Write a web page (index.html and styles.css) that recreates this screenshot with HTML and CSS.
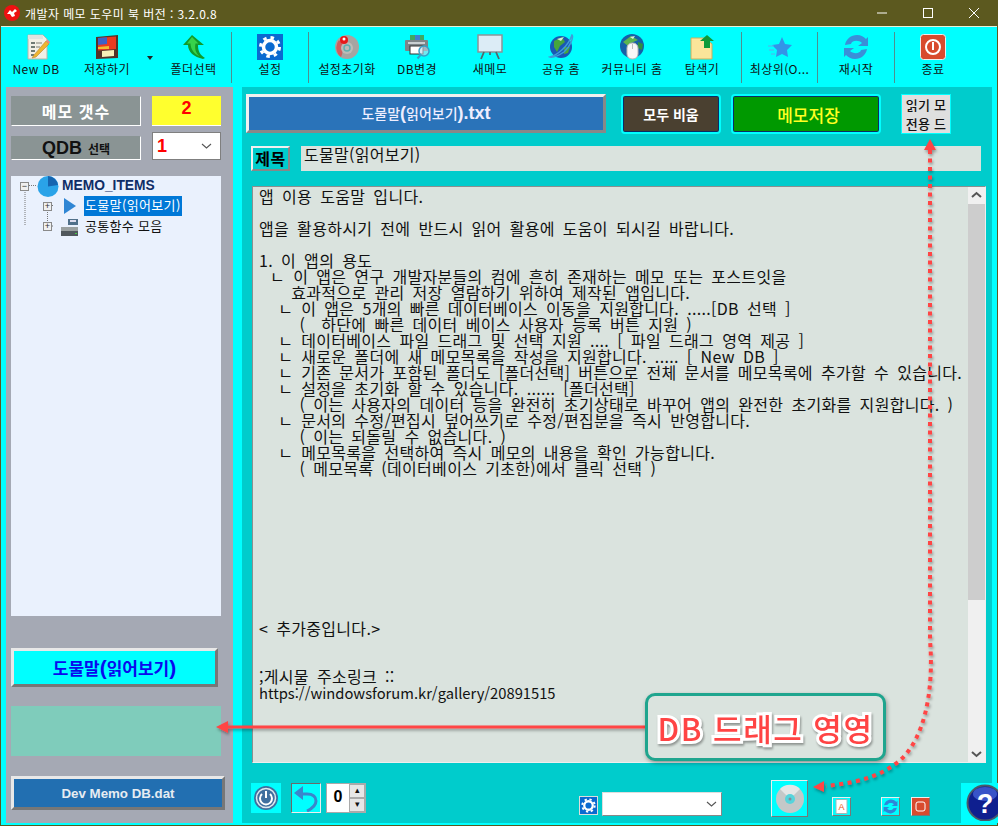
FILE: index.html
```html
<!DOCTYPE html>
<html lang="ko">
<head>
<meta charset="utf-8">
<title>개발자 메모 도우미 북</title>
<link rel="stylesheet" href="styles.css">
</head>
<body>
<div class="window">
  <header class="titlebar">
    <svg class="app-icon" width="16" height="16" viewBox="0 0 16 16"><circle cx="8" cy="8" r="8" fill="#ee1111"/><path d="M3 9l3-4 2 2 3-3 2 2-3 2 1 3-3 1-2-3z" fill="#fff"/></svg>
    <span class="title-text">개발자 메모 도우미 북 버전 : 3.2.0.8</span>
    <div class="win-controls">
      <svg width="46" height="26" viewBox="0 0 46 26"><path d="M18 13h10" stroke="#fff"/></svg>
      <svg width="46" height="26" viewBox="0 0 46 26"><rect x="18.500" y="8.500" width="9" height="9" fill="none" stroke="#fff"/></svg>
      <svg width="46" height="26" viewBox="0 0 46 26"><path d="M18 8l10 10M28 8L18 18" stroke="#fff"/></svg>
    </div>
  </header>

  <nav class="toolbar">
    <div class="tool t-new"><svg class="nudge2" width="26" height="26" viewBox="0 0 26 26"><path d="M3 1h15l4 4v20H3z" fill="#f1efe6" stroke="#b5b5aa"/><path d="M3 1h15v4H3z" fill="#dfe3e0"/><path d="M6 9h4M6 13h4M6 17h4M6 21h3" stroke="#6f7a74" stroke-width="2"/><path d="M11 9h6M11 13h4" stroke="#a5a59c" stroke-width="1.500"/><path d="M9 21L21 7l3 3-13 13-4 1z" fill="#eeb530" stroke="#b9832a" stroke-width=".6"/><path d="M21 7l1.500-1.500 2.500 2.500-1 2z" fill="#e78a80"/></svg><span>New DB</span></div>
    <div class="tool t-save"><svg width="26" height="26" viewBox="0 0 26 26"><path d="M2 3l22-2v23L2 25z" fill="#553328"/><path d="M4 4l18-1.500V15L4 16.500z" fill="#ea3a20"/><path d="M4 4l9-.8V10L4 11z" fill="#3b62c8"/><path d="M8 17l12-1v6L8 23z" fill="#f6eeb8"/><path d="M4 13l11-1v3H4z" fill="#f3bd2d"/></svg><span>저장하기</span></div>
    <div class="tool-caret"></div>
    <div class="tool t-folder"><svg width="26" height="26" viewBox="0 0 26 26"><path d="M11 1L2 11h5c0 7 6 12 15 14l2-1c-5-3-7-7-7-13h6z" fill="#129a2a"/><path d="M11 3L6 9.500h3.500c0 5 3 10 9 13-4-4-5-8-4-13h3z" fill="#37d24a"/></svg><span>폴더선택</span></div>
    <div class="sep sep-first"></div>
    <div class="tool t-76"><svg width="26" height="26" viewBox="0 0 26 26"><rect width="26" height="26" fill="#0a6ad0"/><circle cx="13" cy="13" r="6.500" fill="none" stroke="#fff" stroke-width="3.500"/><circle cx="13" cy="13" r="9.500" fill="none" stroke="#fff" stroke-width="3" stroke-dasharray="3.500 4"/></svg><span>설정</span></div>
    <div class="sep"></div>
    <div class="tool t-76"><svg width="26" height="26" viewBox="0 0 26 26"><circle cx="13" cy="13" r="12" fill="#a5a5a2"/><path d="M5 6a12 12 0 0 0 2 17c2-3 1-7 3-11z" fill="#cf5f5f"/><circle cx="13" cy="14" r="6" fill="#bcbcb8"/><circle cx="13" cy="14" r="3" fill="none" stroke="#5fb0b0" stroke-width="1.500"/><circle cx="10" cy="6" r="4" fill="#e81818"/><circle cx="10" cy="5" r="1.500" fill="#fff"/></svg><span>설정초기화</span></div>
    <div class="tool t-db"><svg width="26" height="26" viewBox="0 0 26 26"><path d="M6 1h14v6H6z" fill="#3fa862"/><path d="M11 1h5v6h-5z" fill="#3f7fd0"/><rect x="1" y="6" width="23" height="11" rx="1" fill="#7d8488"/><rect x="4" y="8" width="17" height="2" fill="#c9cfd2"/><rect x="6" y="12" width="13" height="8" fill="#fff" stroke="#333"/><circle cx="20" cy="17" r="5" fill="#bcd8e8" fill-opacity=".6" stroke="#3a9fc7" stroke-width="1.500"/><path d="M16.500 21l-3 3.500" stroke="#3a9fc7" stroke-width="2"/></svg><span>DB변경</span></div>
    <div class="tool t-memo"><svg width="26" height="26" viewBox="0 0 26 26"><rect x="1" y="1" width="24" height="17" fill="#dcecf6" stroke="#8a9498" stroke-width="1.500"/><path d="M7 18l-3 7M19 18l3 7M13 18v3" stroke="#55666b" stroke-width="1.800"/></svg><span>새메모</span></div>
    <div class="tool t-share"><svg width="26" height="26" viewBox="0 0 26 26"><circle cx="13" cy="13" r="11" fill="#1a58b4"/><path d="M6 7l8-4 3 5-5 4-3 6-3-5z" fill="#46a53c"/><path d="M16 13h6l-2 6-4 1z" fill="#46a53c"/><path d="M9 5l7-2-3 4z" fill="#d8ecd8"/><path d="M2 23C9 21 20 13 24 1c2 2-2 12-8 17-6 4-11 6-14 5z" fill="none" stroke="#3f9cd8" stroke-width="1.500"/></svg><span>공유 홈</span></div>
    <div class="tool t-comm"><svg width="26" height="26" viewBox="0 0 26 26"><circle cx="13" cy="12" r="12" fill="#1660a8"/><path d="M4 8l8-6 7 4-7 3-3 3z" fill="#5bb450"/><path d="M19 8l5 2-1 6-4-2z" fill="#2f8f40"/><path d="M11 3l5-1-2 3z" fill="#dff0df"/><rect x="8" y="9" width="11" height="16" rx="5" fill="#f7f7f7" stroke="#b5b5b5"/><path d="M13.500 10v5" stroke="#bbb"/></svg><span>커뮤니티 홈</span></div>
    <div class="tool t-exp"><svg width="26" height="26" viewBox="0 0 26 26"><path d="M2 4h14l7 6v15H2z" fill="#fbe59a" stroke="#c9b060"/><path d="M18 1l7 6h-4v7h-6V7h-4z" fill="#0d9a3a"/></svg><span>탐색기</span></div>
    <div class="sep sep-exp"></div>
    <div class="tool t-top"><svg width="26" height="26" viewBox="0 0 26 26"><path d="M15 3l3 7 7 1-5 5 1 7-6-3-6 3 1-7-5-5 7-1z" fill="#3394e8"/><path d="M1 12h6M2 16h5M4 20h4" stroke="#55b0ec"/></svg><span>최상위(O...</span></div>
    <div class="sep"></div>
    <div class="tool t-76"><svg width="26" height="26" viewBox="0 0 26 26"><path d="M2 11C3 5 8 1 14 1c4 0 7 2 9 4l2-2v9H15l4-3c-3-3-10-3-11 1z" fill="#3a8fd8"/><path d="M24 15c-1 6-6 10-12 10-4 0-7-2-9-4l-2 2v-9h10l-4 3c3 3 10 3 11-1z" fill="#3a8fd8"/></svg><span>재시작</span></div>
    <div class="sep"></div>
    <div class="tool t-76"><svg width="26" height="26" viewBox="0 0 26 26"><rect x=".5" y=".5" width="25" height="25" rx="3" fill="#d84b2e" stroke="#eee"/><circle cx="13" cy="13" r="7" fill="none" stroke="#fff" stroke-width="2"/><rect x="12" y="8" width="2" height="8" fill="#fff"/></svg><span>종료</span></div>
  </nav>

  <main class="main">
    <aside class="left">
      <div class="count-row">
        <div class="label label-count">메모 갯수</div>
        <div class="count-value">2</div>
      </div>
      <div class="qdb-row">
        <div class="label label-qdb"><b>QDB</b> 선택</div>
        <div class="qdb-select"><span>1</span><svg width="11" height="6" viewBox="0 0 11 6"><path d="M1 1l4.500 4L10 1" fill="none" stroke="#555" stroke-width="1.100"/></svg></div>
      </div>
      <div class="tree">
        <svg class="tree-lines" width="70" height="60" viewBox="0 0 70 60"><path d="M14 14v36M14 9.500h12M36.500 28v22M37 29.500h5M37 50h5" stroke="#777" stroke-dasharray="1 1" fill="none"/></svg>
        <div class="tree-row tree-root">
          <span class="expander">−</span>
          <svg class="pie" width="22" height="21" viewBox="0 0 22 21"><circle cx="11" cy="10.500" r="10.500" fill="#2aa3e8"/><path d="M11 10.500V0a10.500 10.500 0 0 1 10 9z" fill="#1564b0"/></svg>
          <span class="tree-root-label">MEMO_ITEMS</span>
        </div>
        <div class="tree-row tree-child">
          <span class="expander">+</span>
          <svg class="tree-icon" width="14" height="18" viewBox="0 0 14 18"><path d="M1 1l12 8-12 8z" fill="#2f86d4"/></svg>
          <span class="tree-sel">도물말(읽어보기)</span>
        </div>
        <div class="tree-row tree-child">
          <span class="expander">+</span>
          <svg class="tree-icon tree-drive" width="19" height="18" viewBox="0 0 19 18"><path d="M8 1h10v6H8z" fill="#50708a"/><path d="M10 2h6v2h-6z" fill="#dde"/><path d="M1 9h17v9H1z" fill="#9aa0a0"/><path d="M1 13h17v5H1z" fill="#50575c"/><path d="M15 15h2v1h-2z" fill="#4c4"/></svg>
          <span class="tree-label">공통함수 모음</span>
        </div>
      </div>
      <button class="help-btn">도물말<span class="latin">(</span>읽어보기<span class="latin">)</span></button>
      <div class="drag-area"></div>
      <button class="dev-btn">Dev Memo DB.dat</button>
    </aside>

    <section class="right">
      <div class="action-row">
        <button class="file-btn">도물말<span class="latin">(</span>읽어보기<span class="latin">).txt</span></button>
        <button class="round-btn clear-btn">모두 비움</button>
        <button class="round-btn save-btn">메모저장</button>
        <button class="mode-btn"><span>읽기 모</span><span>전용 드</span></button>
      </div>
      <div class="title-row">
        <div class="title-label">제목</div>
        <div class="title-input">도물말(읽어보기)</div>
      </div>
      <div class="editor">
<pre class="editor-text">앱 이용 도움말 입니다.

앱을 활용하시기 전에 반드시 읽어 활용에 도움이 되시길 바랍니다.

1. 이 앱의 용도
 &#8198;ㄴ 이 앱은 연구 개발자분들의 컴에 흔히 존재하는 메모 또는 포스트잇을
    효과적으로 관리 저장 열람하기 위하여 제작된 앱입니다.
  &#8198;ㄴ 이 앱은 5개의 빠른 데이터베이스 이동을 지원합니다. .....[DB 선택 ]
     (  하단에 빠른 데이터 베이스 사용자 등록 버튼 지원 )
  &#8198;ㄴ 데이터베이스 파일 드래그 및 선택 지원 .... [ 파일 드래그 영역 제공 ]
  &#8198;ㄴ 새로운 폴더에 새 메모목록을 작성을 지원합니다. ..... [ New DB ]
  &#8198;ㄴ 기존 문서가 포함된 폴더도 [폴더선택] 버튼으로 전체 문서를 메모목록에 추가할 수 있습니다.
  &#8198;ㄴ 설정을 초기화 할 수 있습니다. ...... [폴더선택]
     ( 이는 사용자의 데이터 등을 완전히 초기상태로 바꾸어 앱의 완전한 초기화를 지원합니다. )
  &#8198;ㄴ 문서의 수정/편집시 덮어쓰기로 수정/편집분을 즉시 반영합니다.
     ( 이는 되돌릴 수 없습니다. )
  &#8198;ㄴ 메모목록을 선택하여 즉시 메모의 내용을 확인 가능합니다.
     ( 메모목록 (데이터베이스 기초한)에서 클릭 선택 )









&lt; 추가중입니다.&gt;


;게시물 주소링크 ::
<span class="url">https://windowsforum.kr/gallery/20891515</span></pre>
        <div class="scrollbar">
          <svg width="17" height="17" viewBox="0 0 17 17"><path d="M4 10l4.500-4 4.500 4" fill="none" stroke="#555" stroke-width="2"/></svg>
          <div class="scroll-track"><div class="scroll-thumb"></div></div>
          <svg width="17" height="17" viewBox="0 0 17 17"><path d="M4 7l4.500 4 4.500-4" fill="none" stroke="#555" stroke-width="2"/></svg>
        </div>
      </div>
      <div class="bottom-row">
        <div class="icon-box power"><svg width="26" height="26" viewBox="0 0 26 26"><circle cx="13" cy="13" r="12" fill="#3f6f9f"/><circle cx="13" cy="13" r="9.500" fill="none" stroke="#dfe8ee" stroke-width="1.500"/><path d="M9 9a6 6 0 1 0 8 0" fill="none" stroke="#fff" stroke-width="2"/><path d="M13 6v7" stroke="#fff" stroke-width="2"/></svg></div>
        <div class="icon-box undo"><svg width="26" height="27" viewBox="0 0 26 27"><path d="M8 9h6c6 0 9 3 9 7 0 4-3 7-9 10" fill="none" stroke="#3a86cc" stroke-width="3"/><path d="M10 1L1 8l9 7z" fill="#3a86cc"/></svg></div>
        <div class="spinner"><span class="spin-value">0</span><div class="spin-btns"><span class="spin-btn">▴</span><span class="spin-btn">▾</span></div></div>
        <svg class="gear-small" width="19" height="19" viewBox="0 0 26 26"><rect width="26" height="26" fill="#0a6ad0"/><circle cx="13" cy="13" r="6.500" fill="none" stroke="#fff" stroke-width="3.500"/><circle cx="13" cy="13" r="9.500" fill="none" stroke="#fff" stroke-width="3" stroke-dasharray="3.500 4"/></svg>
        <div class="combo"><svg width="11" height="6" viewBox="0 0 11 6"><path d="M1 1l4.500 4L10 1" fill="none" stroke="#555" stroke-width="1.100"/></svg></div>
        <div class="cd-btn"><svg width="30" height="30" viewBox="0 0 30 30"><circle cx="15" cy="15" r="14" fill="#c4c8c8"/><path d="M15 15L5 5a14 14 0 0 1 20 0z" fill="#e4e6e6"/><circle cx="15" cy="15" r="5" fill="#56d4dc"/><circle cx="15" cy="15" r="1.500" fill="#889"/></svg></div>
        <div class="mini mini-a"><svg width="13" height="15" viewBox="0 0 13 15"><path d="M1 .5h11v14H1z" fill="#fff" stroke="#9bb"/><text x="6.500" y="11" font-size="9" text-anchor="middle" fill="#e65a20" font-family="Liberation Sans">A</text></svg></div>
        <div class="mini mini-r"><svg width="15" height="15" viewBox="0 0 26 26"><path d="M2 11C3 5 8 1 14 1c4 0 7 2 9 4l2-2v9H15l4-3c-3-3-10-3-11 1z" fill="#2f86d8"/><path d="M24 15c-1 6-6 10-12 10-4 0-7-2-9-4l-2 2v-9h10l-4 3c3 3 10 3 11-1z" fill="#2f86d8"/></svg></div>
        <div class="mini mini-p"><svg width="17" height="17" viewBox="0 0 17 17"><rect width="17" height="17" fill="#d84b2e"/><rect x="4" y="4" width="9" height="9" rx="2" fill="none" stroke="#fff"/></svg></div>
        <div class="help-circle"><svg width="33" height="38" viewBox="0 0 33 38"><circle cx="20" cy="20" r="17.500" fill="#0f1f8f" stroke="#4a5a6a" stroke-width="2"/><ellipse cx="20" cy="11" rx="12" ry="7" fill="#4a6ae0" opacity=".7"/><text x="20" y="30" font-size="27" font-weight="700" text-anchor="middle" fill="#fff" font-family="Liberation Sans">?</text></svg></div>
      </div>
    </section>
  </main>

  <svg class="overlay" width="998" height="826" viewBox="0 0 998 826">
    <defs><filter id="sh" x="-20%" y="-20%" width="140%" height="140%"><feDropShadow dx="1" dy="2" stdDeviation="1.500" flood-color="#000" flood-opacity=".35"/></filter></defs>
    <g filter="url(#sh)">
      <path d="M645 727H228" stroke="#ff4444" stroke-width="3"/>
      <path d="M216 727l12-6v12z" fill="#ff4444"/>
      <path d="M930 150V640C934 690 925 740 898 762C875 780 850 783 826 786" fill="none" stroke="#ff4444" stroke-width="4" stroke-dasharray="4 4.500"/>
      <path d="M930 139l6 11h-12z" fill="#ff4444"/>
      <path d="M813 787l11-6v11z" fill="#ff4444"/>
    </g>
  </svg>
  <div class="callout"><span>DB 드래그 영영</span></div>
</div>
</body>
</html>
```

FILE: styles.css
```css
* { box-sizing: border-box; }
html, body { margin: 0; padding: 0; }
body { width: 998px; height: 826px; overflow: hidden; font-family: "Noto Sans CJK KR", "Liberation Sans", sans-serif; }
button { font-family: inherit; padding: 0; cursor: default; }
.latin { font-family: "Liberation Sans", sans-serif; }

.window { position: relative; width: 998px; height: 826px; background: #00ffff; display: flex; flex-direction: column; border: 1px solid #5b591f; border-top: 0; }

.titlebar { height: 26px; margin: 0 -1px; background: #5c591f; color: #fff; display: flex; align-items: center; padding-left: 4px; flex: none; }
.app-icon { flex: none; }
.title-text { margin-left: 5px; font-size: 12px; letter-spacing: .42px; flex: 1; }
.win-controls { display: flex; margin-right: 1px; }
.win-controls svg { display: block; }

.toolbar { height: 61px; flex: none; border-top: 1px solid #e8f0d8; display: flex; align-items: flex-start; color: #111; padding-top: 3px; }
.tool { display: flex; flex-direction: column; align-items: center; height: 54px; padding-top: 4px; flex: none; font-size: 12px; letter-spacing: .4px; white-space: nowrap; }
.tool svg { display: block; margin-bottom: 1px; }
.tool span { line-height: 16px; }
.nudge2 { position: relative; left: 2px; }
.t-new { width: 70px; }
.t-save { width: 72px; }
.t-folder { width: 69px; }
.t-76 { width: 76px; }
.t-db { width: 64px; }
.t-memo { width: 82px; }
.t-share { width: 60px; }
.t-comm { width: 82px; }
.t-exp { width: 58px; }
.t-top { width: 75px; }
.tool-caret { width: 16px; flex: none; }
.tool-caret::after { content: ""; display: block; margin: 26px 0 0 4px; width: 0; height: 0; border: 3.500px solid transparent; border-top: 4px solid #222; border-bottom: 0; }
.sep { width: 1px; height: 51px; background: #4f8f8f; flex: none; margin-top: 2px; }
.sep-first { margin-left: 3px; }
.sep-exp { margin-left: 10px; }

.main { flex: 1; min-height: 0; display: flex; padding: 0 5px 2px 5px; gap: 9px; }

.left { width: 227px; background: #a5a9b4; padding: 9px 0 0 5px; flex: none; display: flex; flex-direction: column; align-items: flex-start; }
.count-row { display: flex; gap: 11px; }
.qdb-row { display: flex; gap: 11px; align-items: flex-end; margin-top: 6px; }
.label { width: 130px; background: #8a9494; border: 1px solid; border-color: #8a9494 #fff #fff #8a9494; display: flex; align-items: center; justify-content: center; }
.label-count { height: 30px; color: #fff; font-size: 16px; font-weight: 700; letter-spacing: 1px; }
.label-qdb { height: 24px; font-size: 12px; font-weight: 700; color: #111; }
.label-qdb b { font-size: 18px; font-family: "Liberation Sans", sans-serif; margin-right: 6px; }
.count-value { width: 69px; height: 30px; background: #ffff2e; color: #ff0000; font: 700 18px "Liberation Sans", sans-serif; text-align: center; line-height: 24px; border-bottom: 1px solid #fff; }
.qdb-select { width: 69px; height: 28px; background: #fff; border: 1px solid #7f7f7f; display: flex; align-items: center; justify-content: space-between; padding: 0 8px 0 4px; color: #f00; font: 700 18px "Liberation Sans", sans-serif; }

.tree { position: relative; width: 210px; height: 440px; margin-top: 16px; background: #eaf1fd; flex: none; font-size: 13px; color: #111; }
.tree-lines { position: absolute; left: 0; top: 0; }
.tree-row { position: relative; display: flex; align-items: center; }
.expander { width: 9px; height: 9px; border: 1px solid #8a8a8a; background: #f0f0f0; color: #333; font: 9px/7px "Liberation Sans", sans-serif; text-align: center; flex: none; }
.tree-root { padding-left: 9px; height: 20px; }
.pie { margin-left: 8px; flex: none; }
.tree-root-label { margin-left: 3px; padding-bottom: 2px; font: 700 13.800px "Liberation Sans", sans-serif; color: #0f2d66; }
.tree-child { padding-left: 32px; height: 20.500px; }
.tree-icon { margin-left: 11px; flex: none; }
.tree-drive { margin-left: 8px; }
.tree-sel { margin-left: 7px; background: #0078d7; color: #fff; padding: 0 1px; height: 20px; line-height: 18px; width: 98px; white-space: nowrap; letter-spacing: .35px; }
.tree-label { margin-left: 6px; padding-bottom: 2px; white-space: nowrap; letter-spacing: .3px; }

.help-btn { width: 207px; height: 39px; margin-top: 32px; background: #00ffff; border: 3px solid; border-color: #e8e8e8 #777 #777 #e8e8e8; color: #0a0aee; font-size: 17px; font-weight: 700; }
.help-btn .latin { font-size: 21px; }
.drag-area { width: 210px; height: 50px; margin-top: 19px; background: #7fccbb; }
.dev-btn { width: 214px; height: 34px; margin-top: 20px; background: #226fb1; border: 3px solid; border-color: #e8e8e8 #777 #777 #e8e8e8; color: #e6ecf2; font: 700 13.300px "Liberation Sans", sans-serif; }

.right { flex: 1; min-width: 0; background: #00cccc; padding: 7px 0 0 4px; display: flex; flex-direction: column; }
.action-row { display: flex; align-items: flex-start; }
.file-btn { width: 360px; height: 39px; background: #2a73b9; border: 3px solid; border-color: #f0f0f0 #888 #888 #f0f0f0; color: #eef; font-size: 14px; font-weight: 500; }
.file-btn .latin { font-size: 18px; font-weight: 700; }
.round-btn { height: 40px; border: 2px solid #00ffff; border-radius: 4px; box-shadow: inset 0 0 0 1px #0a2d66; font-size: 14px; font-weight: 700; }
.clear-btn { width: 100px; margin-left: 15px; background: #4a4030; color: #fff; }
.save-btn { width: 150px; margin-left: 10px; padding-left: 5px; background: #009900; color: #ffff22; font-size: 17px; font-weight: 500; }
.mode-btn { width: 50px; height: 40px; margin-left: 20px; background: #dfdfdf; border: 1px solid #00ffff; color: #111; font-size: 13px; font-weight: 500; display: flex; flex-direction: column; justify-content: space-around; align-items: center; }
.mode-btn span { white-space: pre; letter-spacing: .2px; line-height: 16px; }

.title-row { display: flex; margin-top: 12px; margin-left: 5px; }
.title-label { width: 39px; height: 25px; background: #00cccc; border: 2px solid; border-color: #f0f0f0 #888 #888 #f0f0f0; font-size: 16px; font-weight: 700; line-height: 20px; text-align: center; color: #000; letter-spacing: .5px; white-space: nowrap; }
.title-input { width: 680px; height: 25px; margin-left: 11px; background: #dae3de; font-size: 16px; line-height: 16px; padding-left: 3px; color: #111; letter-spacing: .3px; }

.editor { margin-top: 15px; margin-left: 6px; width: 734px; height: 580px; background: #dae3de; border: 1px solid #8a8f8f; border-right-color: #eee; border-bottom-color: #eee; display: flex; }
.editor-text { flex: 1; min-width: 0; margin: 0; padding: 1px 0 0 6px; font-family: "Noto Sans CJK KR", "Liberation Sans", sans-serif; font-size: 16px; line-height: 16px; letter-spacing: .3px; word-spacing: 3.300px; color: #111; overflow: hidden; white-space: pre; }
.url { font-size: 14.740px; line-height: 16px; letter-spacing: 0; word-spacing: 0; }
.scrollbar { width: 17px; flex: none; background: #f0f0f0; display: flex; flex-direction: column; }
.scrollbar svg { display: block; flex: none; }
.scroll-track { flex: 1; }
.scroll-thumb { height: 396px; background: #cdcdcd; }

.bottom-row { display: flex; align-items: flex-start; margin-top: 19px; margin-left: 5px; flex: 1; }
.icon-box { width: 30px; height: 30px; background: #00ffff; display: flex; align-items: center; justify-content: center; margin-top: 1px; flex: none; }
.undo { margin-left: 10px; border: 1px solid; border-color: #6a6a6a #eee #eee #6a6a6a; }
.spinner { display: flex; width: 40px; height: 30px; margin: 1px 0 0 5px; background: #fff; border: 1px solid #aaa; flex: none; }
.spin-value { width: 22px; font: 700 16px/26px "Liberation Sans", sans-serif; color: #000; text-align: center; }
.spin-btns { flex: 1; display: flex; flex-direction: column; }
.spin-btn { flex: 1; background: #e6e6e6; border: 1px solid #aaa; font: 9px/11px "Liberation Sans", sans-serif; text-align: center; color: #111; }
.gear-small { margin: 14px 0 0 213px; border: 1px solid #ddd; flex: none; }
.combo { width: 120px; height: 24px; margin: 10px 0 0 4px; background: #fff; border: 1px solid; border-color: #ddd #888 #888 #ddd; display: flex; align-items: center; justify-content: flex-end; padding-right: 4px; flex: none; }
.cd-btn { width: 37px; height: 37px; margin: -2px 0 0 49px; background: #00ffff; border: 1px solid; border-color: #eee #777 #777 #eee; display: flex; align-items: center; justify-content: center; flex: none; }
.mini { width: 19px; height: 19px; margin-top: 15px; border: 1px solid; border-color: #eee #777 #777 #eee; background: #00ffff; display: flex; align-items: center; justify-content: center; flex: none; }
.mini-a { margin-left: 24px; }
.mini-r { margin-left: 30px; }
.mini-p { margin-left: 11px; background: #d84b2e; }
.help-circle { width: 37px; height: 40px; margin: 1px 0 0 31px; background: #00ffff; flex: none; overflow: hidden; }
.help-circle svg { display: block; margin-left: 4px; }

.overlay { position: absolute; left: -1px; top: 0; pointer-events: none; }
.callout { position: absolute; left: 644px; top: 693px; width: 241px; height: 68px; border: 3px solid #1fa58e; border-radius: 10px; background: #dae3de; box-shadow: 1px 2px 4px rgba(0,0,0,.35); display: flex; align-items: center; justify-content: center; }
.callout span { font-size: 31px; font-weight: 500; color: #ff4444; -webkit-text-stroke: 6px #fff; paint-order: stroke fill; filter: drop-shadow(1px 2px 1px rgba(0,0,0,.35)); letter-spacing: 1.500px; white-space: nowrap; }
```
